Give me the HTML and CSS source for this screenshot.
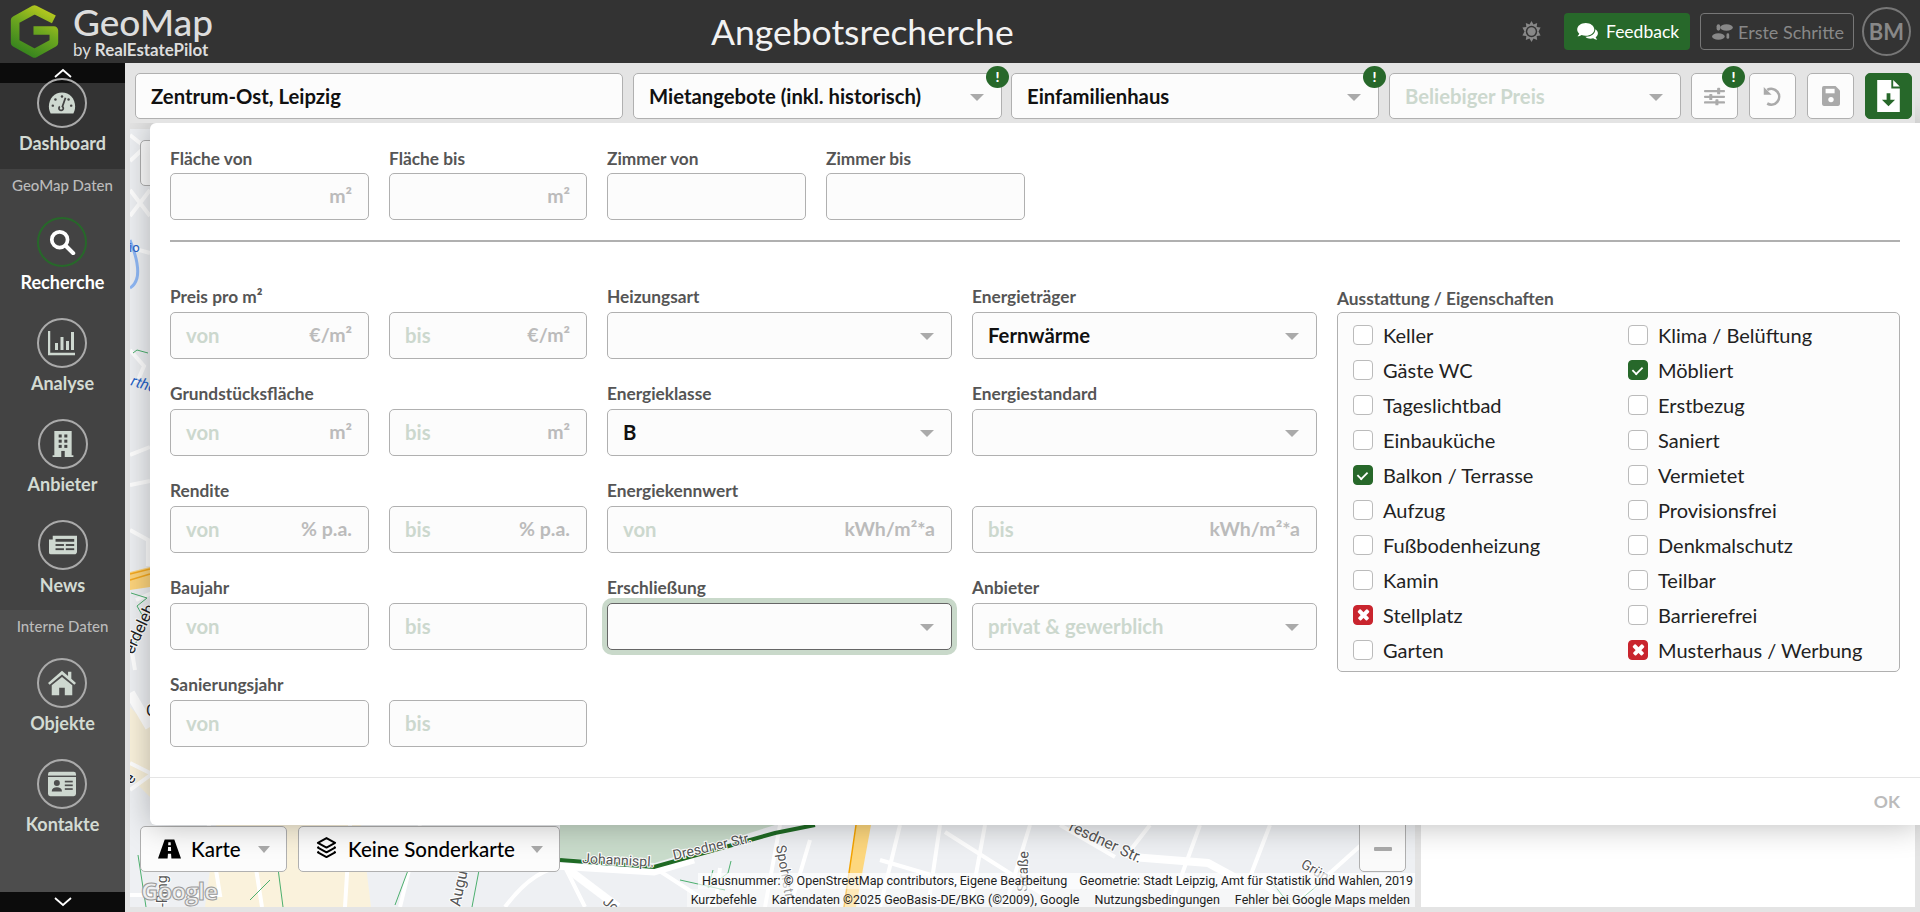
FILE: index.html
```html
<!DOCTYPE html>
<html lang="de">
<head>
<meta charset="utf-8">
<title>GeoMap – Angebotsrecherche</title>
<link rel="stylesheet" href="styles.css">
</head>
<body>
<header class="topbar">
  <div class="brand">
    <svg class="logo" viewBox="0 0 48 52" aria-hidden="true">
      <defs>
        <linearGradient id="lg" gradientUnits="userSpaceOnUse" x1="40" y1="2" x2="14" y2="52">
          <stop offset="0" stop-color="#c4cf1e"/><stop offset=".45" stop-color="#6fa81f"/><stop offset="1" stop-color="#2f7f1e"/>
        </linearGradient>
      </defs>
      <path d="M43 14 24 4.500 5 15V37L24 47.500 43 37V25H23" fill="none" stroke="url(#lg)" stroke-width="8.500" stroke-linejoin="round"/>
    </svg>
    <div class="brand-text">
      <div class="brand-name">GeoMap</div>
      <div class="brand-sub">by <b>RealEstatePilot</b></div>
    </div>
  </div>
  <h1 class="page-title">Angebotsrecherche</h1>
  <div class="top-actions">
    <svg class="sun" viewBox="0 0 24 24" aria-hidden="true"><path d="M12 0l2.300 4 4.200-1.700-.6 4.500 4.500.6L20 12l2.400 4.600-4.500.6.6 4.500-4.200-1.700L12 24l-2.300-4-4.200 1.700.6-4.500-4.500-.6L4 12 1.600 7.400l4.500-.6-.6-4.500L9.700 4z" fill="#888"/><circle cx="12" cy="12" r="6.500" fill="#333"/><circle cx="12" cy="12" r="4.800" fill="#888"/></svg>
    <a class="btn-feedback">
      <svg class="ico-sm" viewBox="0 0 24 20" aria-hidden="true"><path d="M9.500 0C4.300 0 0 3.200 0 7.200c0 1.800.9 3.400 2.300 4.700-.4 1-1.100 1.900-2 2.700 1.800 0 3.400-.6 4.500-1.400 1.400.6 3 .9 4.700.9 5.200 0 9.500-3.200 9.500-7S14.700 0 9.500 0z" fill="#fff"/><path d="M20 6.500c.1.300.1.500.1.800 0 4.800-4.800 8-10 8l-1 0c1.400 1.500 3.500 2.200 5.800 2.200 1 0 2-.2 2.900-.5 1 .8 2.500 1.500 4.500 1.500-.8-.7-1.400-1.600-1.800-2.600 1.500-1.100 2.500-2.700 2.500-4.500 0-1.900-1.200-3.500-3-4.400z" fill="#fff"/></svg>
      Feedback
    </a>
    <a class="btn-steps">
      <svg class="ico-sm" viewBox="0 0 24 20" aria-hidden="true"><g fill="#888"><ellipse cx="17" cy="5" rx="7" ry="3.600"/><rect x="6" y="1.500" width="4" height="7" rx="2"/><ellipse cx="8" cy="15" rx="7" ry="3.600"/><rect x="17" y="11.500" width="3" height="6" rx="1.500"/></g></svg>
      Erste Schritte
    </a>
    <div class="avatar">BM</div>
  </div>
</header>

<div class="shell">
  <nav class="sidebar">
    <div class="side-arrow"><svg viewBox="0 0 20 10" aria-hidden="true"><path d="M2 9 10 2l8 7" fill="none" stroke="#fff" stroke-width="1.800"/></svg></div>
    <div class="side-group side-dark">
      <a class="nav-item">
        <span class="nav-circle"><svg viewBox="0 0 32 28" aria-hidden="true"><path d="M16 2C7.500 2 1 9 1 18c0 3 .8 5.500 2 8h26c1.200-2.500 2-5 2-8C31 9 24.500 2 16 2z" fill="#ced8d0"/><path d="M20 8l-3.500 10a2.500 2.500 0 1 1-3 0" fill="none" stroke="#434343" stroke-width="2"/><g fill="#434343"><circle cx="16" cy="6.500" r="1.400"/><circle cx="8.500" cy="10" r="1.400"/><circle cx="5.500" cy="17" r="1.400"/><circle cx="26.500" cy="17" r="1.400"/><circle cx="23.500" cy="10" r="1.400"/></g></svg></span>
        <span class="nav-label">Dashboard</span>
      </a>
    </div>
    <div class="side-group side-mid">
      <div class="side-head">GeoMap Daten</div>
      <a class="nav-item nav-active">
        <span class="nav-circle"><svg viewBox="0 0 28 28" aria-hidden="true"><circle cx="11.500" cy="11.500" r="8.500" fill="none" stroke="#fff" stroke-width="4"/><path d="M18 18l8 8" stroke="#fff" stroke-width="4.500" stroke-linecap="round"/></svg></span>
        <span class="nav-label">Recherche</span>
      </a>
      <a class="nav-item">
        <span class="nav-circle"><svg viewBox="0 0 28 26" aria-hidden="true"><path d="M1 1v23h26" fill="none" stroke="#ced8d0" stroke-width="2.500"/><g fill="#ced8d0"><rect x="7" y="13" width="3" height="7"/><rect x="12.500" y="7" width="3" height="13"/><rect x="18" y="11" width="3" height="9"/><rect x="23" y="2" width="3" height="18"/></g></svg></span>
        <span class="nav-label">Analyse</span>
      </a>
      <a class="nav-item">
        <span class="nav-circle"><svg viewBox="0 0 24 30" aria-hidden="true"><path d="M2 0h20v28h2v2H0v-2h2z" fill="#ced8d0"/><g fill="#434343"><rect x="7" y="4" width="3.500" height="3.500"/><rect x="13.500" y="4" width="3.500" height="3.500"/><rect x="7" y="10" width="3.500" height="3.500"/><rect x="13.500" y="10" width="3.500" height="3.500"/><rect x="7" y="16" width="3.500" height="3.500"/><rect x="13.500" y="16" width="3.500" height="3.500"/><rect x="10" y="23" width="4" height="7"/></g></svg></span>
        <span class="nav-label">Anbieter</span>
      </a>
      <a class="nav-item">
        <span class="nav-circle"><svg viewBox="0 0 30 20" aria-hidden="true"><path d="M4 0h26v17a3 3 0 0 1-3 3H2a2 2 0 0 1-2-2V4h4z" fill="#ced8d0"/><g fill="#434343"><rect x="7" y="3.500" width="20" height="3"/><rect x="7" y="9" width="9" height="2"/><rect x="18" y="9" width="9" height="2"/><rect x="7" y="13.500" width="9" height="2"/><rect x="18" y="13.500" width="9" height="2"/></g></svg></span>
        <span class="nav-label">News</span>
      </a>
    </div>
    <div class="side-group side-light">
      <div class="side-head">Interne Daten</div>
      <a class="nav-item">
        <span class="nav-circle"><svg viewBox="0 0 30 26" aria-hidden="true"><path d="M15 0 0 13l1.800 2L15 4l13.200 11 1.800-2-5-4.500V1h-3.500v4.400z" fill="#ced8d0"/><path d="M15 6.500 4 15.500V26h8v-8h6v8h8V15.500z" fill="#ced8d0"/></svg></span>
        <span class="nav-label">Objekte</span>
      </a>
      <a class="nav-item">
        <span class="nav-circle"><svg viewBox="0 0 30 26" aria-hidden="true"><rect width="30" height="26" rx="2.500" fill="#ced8d0"/><g fill="#4d4d4d"><rect y="4" width="30" height="1.500"/><circle cx="9.500" cy="12" r="3.200"/><path d="M4 21c0-3 2.400-4.500 5.500-4.500S15 18 15 21z"/><rect x="18" y="9.500" width="8.500" height="1.800"/><rect x="18" y="13.500" width="8.500" height="1.800"/><rect x="18" y="17.500" width="8.500" height="1.800"/></g></svg></span>
        <span class="nav-label">Kontakte</span>
      </a>
    </div>
    <div class="side-arrow side-arrow-bottom"><svg viewBox="0 0 20 10" aria-hidden="true"><path d="M2 1l8 7 8-7" fill="none" stroke="#fff" stroke-width="1.800"/></svg></div>
  </nav>

  <main class="main">
    <div class="toolbar">
      <div class="ctl tb-loc"><span class="val">Zentrum-Ost, Leipzig</span></div>
      <div class="ctl sel tb-sel1"><span class="val">Mietangebote (inkl. historisch)</span><span class="badge">!</span></div>
      <div class="ctl sel tb-sel2"><span class="val">Einfamilienhaus</span><span class="badge">!</span></div>
      <div class="ctl sel tb-sel3"><span class="ph">Beliebiger Preis</span></div>
      <button class="tool-btn"><svg viewBox="0 0 24 20" aria-hidden="true"><g fill="#aaa"><rect y="2.500" width="24" height="2.600" rx="1"/><rect y="9" width="24" height="2.600" rx="1"/><rect y="15.500" width="24" height="2.600" rx="1"/><rect x="15" y="0" width="3.500" height="7.500" rx="1"/><rect x="6" y="7" width="3.500" height="7" rx="1"/><rect x="13" y="13" width="3.500" height="7" rx="1"/></g></svg><span class="badge">!</span></button>
      <button class="tool-btn"><svg viewBox="0 0 22 24" aria-hidden="true"><path d="M5 4.500a9 9 0 1 1 0 15.500" fill="none" stroke="#aaa" stroke-width="3"/><path d="M1 1v9h9z" fill="#aaa"/></svg></button>
      <button class="tool-btn"><svg class="ico-save" viewBox="0 0 20 22" aria-hidden="true"><path d="M2 0h13l5 5v15a2 2 0 0 1-2 2H2a2 2 0 0 1-2-2V2a2 2 0 0 1 2-2z" fill="#aaa"/><rect x="4" y="3" width="10" height="5" fill="#fff"/><circle cx="10" cy="15" r="3" fill="#fff"/></svg></button>
      <button class="tool-btn tool-primary"><svg viewBox="0 0 24 34" aria-hidden="true"><path d="M0 0h15v9h9v25H0z" fill="#fff"/><path d="M17 0l7 7h-7z" fill="#fff"/><path d="M10 14h4v7h5l-7 7-7-7h5z" fill="#27682a"/></svg></button>
    </div>

    <div class="content">
      <section class="map">
        <svg class="map-art" viewBox="130 129 1285 778" preserveAspectRatio="none" aria-hidden="true">
          <rect x="130" y="129" width="1285" height="778" fill="#eef0f3"/>
          <path d="M130 707l20 20v70l-20-20z" fill="#faf2dc"/>
          <path d="M216 825h145l10 82H205z" fill="#faf2dc"/>
          <path d="M560 825h215l-120 38-95-5z" fill="#c9dccb"/>
          <g fill="none" stroke="#fff" stroke-width="4">
            <path d="M130 135l15 12-15 14M150 190l-20 26M130 190l20 26"/>
            <path d="M130 248q10 2 20 5M130 350l14 16-6 14-8 2M130 455l20-8M130 485l20-4"/>
            <path d="M130 530l18 10v26M136 600l18-8M130 640l5 30"/>
            <path d="M130 763l20 10M130 790l22-16"/>
            <path d="M130 895h90l-12-75M250 830l12 77M350 825l-5 82M420 825l-20 82M505 907q30-40 60-40l20 40M655 868l60 39"/>
            <path d="M720 868l-5 39M780 825l-15 82M810 840l-20 67M900 825l-20 82M940 825l-12 82M985 825l-15 82M1030 825l-25 82M880 860l85 25M945 832l110 70M1060 825l55 32M1150 825l-25 32M1200 825l-30 82M1270 825l-20 52 90 60M1300 900l100-90"/>
            <path d="M130 693l20 34" stroke-width="10"/>
            <path d="M569 870l49 37" stroke-width="8"/>
            <path d="M1132 857l76 6 37 20" stroke-width="8"/>
            <path d="M555 866l99 6 40-12" stroke-width="7"/>
          </g>
          <path d="M130 240Q140 265 137 278 135 285 130 288" fill="none" stroke="#8fb8f5" stroke-width="3"/>
          <path d="M130 572l20-5v20l-20 3z" fill="#fdd47c"/>
          <path d="M130 580l20-6M130 574l20-5" stroke="#f4a81e" stroke-width="1.500" fill="none"/>
          <path d="M856 825 844 907h12l15-82z" fill="#fdd77e"/>
          <path d="M856 825 844 907" stroke="#f4a300" stroke-width="1.500"/>
          <path d="M560 860l94 7 121-34 40-8" fill="none" stroke="#1f6a24" stroke-width="4"/>
          <g fill="none" stroke="#4caf6e" stroke-width="1">
            <path d="M133 353l4-3 11 3M131 593l16 5-10 8 8 14-10 25M138 855l8 52"/>
            <path d="M275 840q-15 5-20 20M270 880l-20 20M273 830l10 77M410 865l-15 40M480 865l-8 42M680 880l45 10M713 870l-5 18 20-15 3-12M1270 880l20 25M1300 900l30-25"/>
          </g>
          <g font-family="Roboto, sans-serif" font-size="14" fill="#555">
            <text x="582" y="863" transform="rotate(3 582 863)" class="lbl">Johannispl.</text>
            <text x="674" y="860" transform="rotate(-13 674 860)" class="lbl">Dresdner Str.</text>
            <text x="776" y="846" transform="rotate(80 776 846)" class="lbl">Spohrstr.</text>
            <text x="1068" y="830" transform="rotate(25 1068 830)" class="lbl lbl-big">resdner Str.</text>
            <text x="1027" y="892" transform="rotate(-88 1027 892)" class="lbl">Straße</text>
            <text x="1300" y="867" transform="rotate(30 1300 867)" class="lbl">Grün</text>
            <text x="460" y="907" transform="rotate(-78 460 907)" class="lbl lbl-big">Augustus</text>
            <text x="602" y="903" transform="rotate(40 602 903)" class="lbl">Jo</text>
            <text x="167" y="907" transform="rotate(-90 167 907)" class="lbl">-Ring</text>
            <text x="133" y="655" transform="rotate(-65 133 655)" class="lbl-dark">erdeleb</text>
            <text x="146" y="716" class="lbl-dark">O</text>
            <text x="131" y="785" transform="rotate(-50 131 785)" class="lbl-dark">e</text>
          </g>
          <text x="130" y="385" transform="rotate(18 130 385)" font-family="Roboto, sans-serif" font-size="15" font-style="italic" fill="#2563c9">rthe</text>
          <text x="129" y="252" font-family="Roboto, sans-serif" font-size="13" fill="#2563c9">io</text>
        </svg>
        <div class="map-btn-hidden"></div>
        <div class="map-controls">
          <div class="map-btn btn-karte">
            <svg class="ico-road" viewBox="0 0 24 20" aria-hidden="true"><path d="M7 0h10l7 20H14l-.4-5h-3.200l-.4 5H0zM10.800 3l-.2 3h2.800l-.2-3zM10.500 8l-.2 4h3.400l-.2-4z" fill="#000" fill-rule="evenodd"/></svg>
            <span>Karte</span><i class="caret"></i>
          </div>
          <div class="map-btn btn-sonder">
            <svg class="ico-layers" viewBox="0 0 22 26" aria-hidden="true"><g fill="none" stroke="#000" stroke-width="2" stroke-linejoin="round"><path d="M11 1 20 6l-9 5-9-5z"/><path d="M3 10 2 11l9 5 9-5-1-1"/><path d="M3 15l-1 1 9 5 9-5-1-1"/></g></svg>
            <span>Keine Sonderkarte</span><i class="caret"></i>
          </div>
        </div>
        <div class="zoom-ctl"><i></i></div>
        <div class="google">Google</div>
        <div class="attrib">
          <div class="attrib-line attrib-a"><span>Hausnummer: © OpenStreetMap contributors, Eigene Bearbeitung</span><span>Geometrie: Stadt Leipzig, Amt für Statistik und Wahlen, 2019</span></div>
          <div class="attrib-line attrib-b"><span>Kurzbefehle</span><span>Kartendaten ©2025 GeoBasis-DE/BKG (©2009), Google</span><span>Nutzungsbedingungen</span><span>Fehler bei Google Maps melden</span></div>
        </div>
      </section>
      <aside class="panel"></aside>
    </div>

    <div class="modal">
      <div class="modal-body">
        <div class="row-top">
          <div class="field"><label>Fläche von</label><div class="ctl inp"><span class="suf">m²</span></div></div>
          <div class="field"><label>Fläche bis</label><div class="ctl inp"><span class="suf">m²</span></div></div>
          <div class="field"><label>Zimmer von</label><div class="ctl inp"></div></div>
          <div class="field"><label>Zimmer bis</label><div class="ctl inp"></div></div>
        </div>
        <hr class="divider">
        <div class="form-grid">
          <div class="field"><label>Preis pro m²</label><div class="ctl inp"><span class="ph">von</span><span class="suf">€/m²</span></div></div>
          <div class="field"><label>&nbsp;</label><div class="ctl inp"><span class="ph">bis</span><span class="suf">€/m²</span></div></div>
          <div class="field"><label>Heizungsart</label><div class="ctl sel"></div></div>
          <div class="field"><label>Energieträger</label><div class="ctl sel"><span class="val">Fernwärme</span></div></div>
          <div class="field-box">
            <label>Ausstattung / Eigenschaften</label>
            <div class="checks">
              <div class="chk"><i></i>Keller</div><div class="chk"><i></i>Klima / Belüftung</div>
              <div class="chk"><i></i>Gäste WC</div><div class="chk"><i class="on"></i>Möbliert</div>
              <div class="chk"><i></i>Tageslichtbad</div><div class="chk"><i></i>Erstbezug</div>
              <div class="chk"><i></i>Einbauküche</div><div class="chk"><i></i>Saniert</div>
              <div class="chk"><i class="on"></i>Balkon / Terrasse</div><div class="chk"><i></i>Vermietet</div>
              <div class="chk"><i></i>Aufzug</div><div class="chk"><i></i>Provisionsfrei</div>
              <div class="chk"><i></i>Fußbodenheizung</div><div class="chk"><i></i>Denkmalschutz</div>
              <div class="chk"><i></i>Kamin</div><div class="chk"><i></i>Teilbar</div>
              <div class="chk"><i class="no"></i>Stellplatz</div><div class="chk"><i></i>Barrierefrei</div>
              <div class="chk"><i></i>Garten</div><div class="chk"><i class="no"></i>Musterhaus / Werbung</div>
            </div>
          </div>
          <div class="field"><label>Grundstücksfläche</label><div class="ctl inp"><span class="ph">von</span><span class="suf">m²</span></div></div>
          <div class="field"><label>&nbsp;</label><div class="ctl inp"><span class="ph">bis</span><span class="suf">m²</span></div></div>
          <div class="field"><label>Energieklasse</label><div class="ctl sel"><span class="val">B</span></div></div>
          <div class="field"><label>Energiestandard</label><div class="ctl sel"></div></div>
          <div class="field"><label>Rendite</label><div class="ctl inp"><span class="ph">von</span><span class="suf">% p.a.</span></div></div>
          <div class="field"><label>&nbsp;</label><div class="ctl inp"><span class="ph">bis</span><span class="suf">% p.a.</span></div></div>
          <div class="field"><label>Energiekennwert</label><div class="ctl inp"><span class="ph">von</span><span class="suf">kWh/m²*a</span></div></div>
          <div class="field"><label>&nbsp;</label><div class="ctl inp"><span class="ph">bis</span><span class="suf">kWh/m²*a</span></div></div>
          <div class="field"><label>Baujahr</label><div class="ctl inp"><span class="ph">von</span></div></div>
          <div class="field"><label>&nbsp;</label><div class="ctl inp"><span class="ph">bis</span></div></div>
          <div class="field"><label>Erschließung</label><div class="ctl sel focus"></div></div>
          <div class="field"><label>Anbieter</label><div class="ctl sel"><span class="ph">privat &amp; gewerblich</span></div></div>
          <div class="field"><label>Sanierungsjahr</label><div class="ctl inp"><span class="ph">von</span></div></div>
          <div class="field"><label>&nbsp;</label><div class="ctl inp"><span class="ph">bis</span></div></div>
        </div>
      </div>
      <div class="modal-foot"><span class="ok">OK</span></div>
    </div>
  </main>
</div>
</body>
</html>
```
FILE: styles.css
```css
* { box-sizing: border-box; }
html, body { margin: 0; height: 912px; overflow: hidden; }
body { font-family: Lato, "Noto Sans", sans-serif; background: #e4e4e4; color: #111; display: flex; flex-direction: column; }

/* header */
.topbar { height: 63px; flex: none; background: #333; display: flex; align-items: center; }
.brand { flex: 0 0 711px; display: flex; align-items: center; padding-left: 10px; gap: 14px; }
.logo { width: 49px; height: 53px; display: block; }
.brand-text { color: #ddd; }
.brand-name { font-size: 37px; line-height: 36px; font-weight: 500; }
.brand-sub { font-size: 16.900px; line-height: 18px; margin-top: 1px; }
.brand-sub b { font-weight: 700; }
.page-title { margin: 0; font-size: 35.500px; font-weight: 400; color: #f2f2f2; line-height: 40px; }
.top-actions { margin-left: auto; display: flex; align-items: center; padding-right: 9px; }
.sun { width: 21px; height: 23px; margin-right: 22px; }
.btn-feedback, .btn-steps { height: 37px; border-radius: 4px; display: flex; align-items: center; gap: 7px; }
.btn-feedback { width: 126px; background: #27682a; color: #fff; padding-left: 13px; margin-right: 10px; font-size: 17.500px; }
.btn-steps { width: 154px; border: 1px solid #777; color: #888; padding-left: 10px; margin-right: 8px; font-size: 18px; gap: 5px; }
.ico-sm { width: 22px; height: 18px; flex: none; }
.avatar { width: 49px; height: 49px; border: 2px solid #777; border-radius: 50%; color: #888; font-size: 22px; font-weight: 700; display: flex; align-items: center; justify-content: center; }

/* sidebar */
.shell { flex: 1; display: flex; min-height: 0; }
.sidebar { width: 125px; flex: none; display: flex; flex-direction: column; background: #4d4d4d; color: #d3dbd3; position: relative; z-index: 5; }
.side-arrow { height: 20px; background: #0c0c0c; display: flex; align-items: center; justify-content: center; flex: none; }
.side-arrow svg { width: 20px; height: 10px; }
.side-arrow-bottom { position: absolute; left: 0; right: 0; bottom: 0; }
.side-group { display: flex; flex-direction: column; align-items: center; flex: none; }
.side-dark { height: 86px; background: #333; }
.side-dark .nav-item { margin-top: -5px; position: relative; }
.side-mid { height: 441px; background: #434343; }
.side-light { flex: 1; background: #4d4d4d; }
.side-head { flex: none; font-size: 15px; font-weight: 500; line-height: 18px; color: #bbb; margin-top: 7px; height: 18px; margin-bottom: 23px; }
.nav-item { flex: none; display: flex; flex-direction: column; align-items: center; margin-bottom: 24px; }
.nav-item:last-child { margin-bottom: 0; }
.nav-circle { width: 50px; height: 50px; border: 2px solid #aaa; border-radius: 50%; display: flex; align-items: center; justify-content: center; }
.nav-circle svg { width: 28px; height: 26px; }
.nav-label { font-size: 18px; font-weight: 700; line-height: 24px; margin-top: 3px; }
.nav-active .nav-circle { border-color: #27682a; }
.nav-active .nav-label { color: #fff; }

/* main */
.main { flex: 1; min-width: 0; position: relative; display: flex; flex-direction: column; padding: 0 5px 5px; overflow: hidden; }
.toolbar { flex: none; height: 60px; display: flex; padding: 10px 5px 4px; background: #e4e4e4; position: relative; z-index: 3; margin-bottom: 6px; }
.toolbar > * { flex: none; }
.ctl { height: 47px; border: 1px solid #b0b0b0; border-radius: 5px; background: #fcfcfc; position: relative; display: flex; align-items: center; padding: 0 15px; font-size: 20.300px; font-weight: 700; }
.field .ctl { padding-bottom: 2px; }
.toolbar .ctl { height: 46px; }
.val { color: #111; }
.ph { color: #ccd8ce; }
.suf { margin-left: auto; margin-right: 1px; color: #bbb; font-size: 19.500px; }
.sel::after { content: ""; position: absolute; right: 17px; top: 20px; border: 7px solid transparent; border-top: 7px solid #aaa; border-bottom: 0; }
.tb-loc { width: 488px; margin-right: 10px; }
.tb-sel1 { width: 369px; margin-right: 9px; }
.tb-sel2 { width: 368px; margin-right: 10px; }
.tb-sel3 { width: 292px; margin-right: 10px; }
.badge { position: absolute; top: -8px; right: -8px; width: 23px; height: 22px; border-radius: 50%; background: #27682a; color: #fff; font-size: 14px; font-weight: 900; font-family: Lato, sans-serif; line-height: 22px; text-align: center; }
.tool-btn { width: 47px; height: 46px; border: 1px solid #b0b0b0; border-radius: 5px; background: #fcfcfc; margin-right: 11px; padding: 0; position: relative; display: flex; align-items: center; justify-content: center; }
.tool-btn:last-child { margin-right: 0; }
.tool-btn svg { width: 21px; height: 21px; }
.tool-btn .ico-save { height: 20px; width: 18px; }
.tool-primary { background: #27682a; border-color: #27682a; }
.tool-primary svg { width: 23px; height: 32px; }

.content { flex: 1; min-height: 0; display: flex; gap: 6px; }
.map { width: 1285px; flex: none; position: relative; overflow: hidden; }
.map-art { position: absolute; inset: 0; width: 100%; height: 100%; display: block; }
.lbl { fill: #555; paint-order: stroke; stroke: #fff; stroke-width: 2px; }
.lbl-big { font-size: 15.500px; }
.lbl-dark { fill: #222; font-size: 16px; paint-order: stroke; stroke: #fff; stroke-width: 2px; }
.panel { flex: 1; background: #fff; }
.map-btn-hidden { position: absolute; left: 10px; top: 11px; width: 40px; height: 46px; border: 1px solid #b0b0b0; border-radius: 5px; background: #fcfcfc; }
.map-controls { position: absolute; left: 10px; bottom: 35px; display: flex; gap: 11px; }
.map-btn { height: 46px; border: 1px solid #b0b0b0; border-radius: 5px; background: #fcfcfc; display: flex; align-items: center; font-size: 20.500px; color: #000; font-weight: 500; }
.btn-karte { width: 147px; padding-left: 17px; }
.btn-sonder { width: 262px; padding-left: 17px; }
.ico-road { width: 23px; height: 20px; margin-right: 10px; flex: none; }
.ico-layers { width: 21px; height: 25px; margin-right: 11px; flex: none; }
.caret { margin-left: auto; margin-right: 16px; border: 6.500px solid transparent; border-top: 7px solid #aaa; border-bottom: 0; }
.zoom-ctl { position: absolute; left: 1229px; bottom: 35px; width: 47px; height: 60px; border: 1px solid #b0b0b0; border-radius: 5px; background: #fafafa; display: flex; align-items: flex-end; justify-content: center; padding-bottom: 20px; }
.zoom-ctl i { width: 18px; height: 4px; border-radius: 1px; background: #aaa; }
.google { position: absolute; left: 11px; bottom: 3px; font-family: "Open Sans", sans-serif; font-size: 24px; line-height: 26px; font-weight: 700; letter-spacing: -1px; color: #eee; -webkit-text-stroke: 1px #999; }
.attrib { position: absolute; right: 0; bottom: 0; font-family: Roboto, sans-serif; font-size: 12.500px; color: #222; display: flex; flex-direction: column; align-items: flex-end; }
.attrib-line { display: flex; }
.attrib-a { height: 16px; line-height: 16px; gap: 12px; padding: 0 2px 0 4px; background: rgba(255,255,255,.7); }
.attrib-b { height: 18px; line-height: 14px; padding: 4px 5px 0 4px; gap: 15px; background: rgba(255,255,255,.45); }

/* modal */
.modal { position: absolute; left: 25px; right: 0; top: 60px; height: 702px; background: #fff; border-radius: 6px 0 0 6px; box-shadow: 0 0 32px rgba(0,0,0,.28); z-index: 2; display: flex; flex-direction: column; }
.modal-body { flex: 1; padding: 24px 20px 0; min-height: 0; }
.modal-foot { height: 48px; flex: none; border-top: 1px solid #e5e5e5; display: flex; align-items: center; justify-content: flex-end; padding-right: 20px; }
.ok { color: #bbb; font-size: 17.500px; font-weight: 700; }
.row-top { display: grid; grid-template-columns: 199px 198px 199px 199px; column-gap: 20px; }
.field label, .field-box label { display: block; height: 24px; line-height: 24px; margin-bottom: 2px; font-size: 17.300px; font-weight: 700; color: #555; white-space: nowrap; }
.form-grid .field label, .form-grid .field-box label { line-height: 22px; }
.divider { height: 2px; border: 0; background: #b0b0b0; margin: 20px 0 44px; }
.form-grid { display: grid; grid-template-columns: 199px 198px 345px 345px 563px; column-gap: 20px; row-gap: 24px; grid-auto-rows: 73px; }
.field-box { grid-column: 5; grid-row: 1 / span 5; padding-top: 2px; }
.field-box label { margin-bottom: 0; }
.checks { height: 360px; border: 1px solid #b0b0b0; border-radius: 5px; background: #fcfcfc; display: grid; grid-template-columns: 275px 1fr; grid-auto-rows: 35px; padding: 4px 0 0 15px; font-size: 20px; font-weight: 400; color: #222; }
.chk { display: flex; align-items: center; }
.chk i { width: 20px; height: 20px; border: 1px solid #bbb; border-radius: 4px; background: #fff; margin-right: 10px; flex: none; position: relative; }
.chk i.on { background: #27682a; border-color: #27682a; }
.chk i.on::after { content: ""; position: absolute; left: 5px; top: 3px; width: 5px; height: 9px; border: solid #fff; border-width: 0 2.500px 2.500px 0; transform: rotate(45deg) scale(.9); }
.chk i.no { background: #c9252e; border-color: #c9252e; }
.chk i.no::before, .chk i.no::after { content: ""; position: absolute; left: 2.500px; top: 7.250px; width: 13px; height: 3.500px; border-radius: 1px; background: #fff; transform: rotate(45deg); }
.chk i.no::after { transform: rotate(-45deg); }
.focus { border-color: #666; box-shadow: 0 0 0 5px #c9d9ca; }
```
